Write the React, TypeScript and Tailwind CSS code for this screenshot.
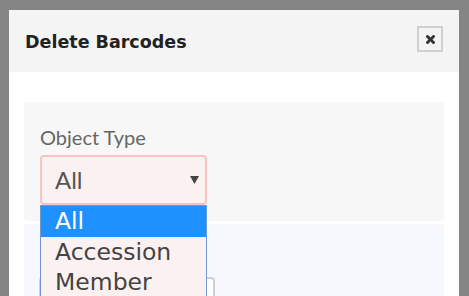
import { useState } from 'react';

const OPTIONS = ['All', 'Accession', 'Member'];

export default function App() {
  const [selected, setSelected] = useState('All');

  return (
    <div className="min-h-[296px] h-[296px] overflow-hidden bg-[#858585] pl-[9px] pt-[10px]">
      <div className="w-[450px] h-[300px] bg-white">
        <div className="h-[62px] bg-[#f4f4f4] flex items-center justify-between pl-[16px] pr-[16px]">
          <h2 className="text-[17.5px] font-bold text-[#222] font-['DejaVu_Sans',sans-serif] pt-[2px]">Delete Barcodes</h2>
          <button
            type="button"
            className="w-[26px] h-[26px] border-2 border-[#d0d0d0] flex items-center justify-center mb-[4px]"
          >
            <svg width="9" height="9" viewBox="0 0 9 9">
              <path d="M1.5 1.5 L7.5 7.5 M7.5 1.5 L1.5 7.5" stroke="#333" strokeWidth="2.8" strokeLinecap="square" />
            </svg>
          </button>
        </div>
        <div className="pt-[30px] px-[15px] flex flex-col gap-[3px]">
          <div className="h-[119px] rounded-[4px] bg-[#f7f7f7] px-[16px] pt-[22px]">
            <label className="block text-[20px] leading-[26px] text-[#666] font-['Lato',sans-serif]">Object Type</label>
            <div className="relative mt-[5px] w-[167px]">
              <div className="h-[50px] rounded-[4px] border-2 border-[#f7c3c3] bg-[#fcf1f1] flex items-center justify-between pl-[13px] pr-[6px]">
                <span className="text-[24px] text-[#555] font-['Lato',sans-serif]">{selected}</span>
                <svg width="9" height="8" viewBox="0 0 9 8">
                  <path d="M0 0 H9 L4.5 8 Z" fill="#444" />
                </svg>
              </div>
              <ul className="absolute left-0 top-[50px] w-[167px] z-10 border border-[#7097d6] bg-[#fcf1f1] font-['DejaVu_Sans',sans-serif] text-[23.5px] leading-[31px]">
                {OPTIONS.map((opt) => (
                  <li
                    key={opt}
                    onClick={() => setSelected(opt)}
                    className={`pl-[14px] h-[30px] ${opt === selected ? 'bg-[#1e90ff] text-white h-[31px]' : 'text-[#444]'}`}
                  >
                    {opt}
                  </li>
                ))}
              </ul>
            </div>
          </div>
          <div className="h-[120px] rounded-[4px] bg-[#f7f8fd] px-[15px] pt-[53px]">
            <div className="w-[176px] h-[36px] rounded-[4px] border-2 border-[#d0d0d0] bg-white" />
          </div>
        </div>
      </div>
    </div>
  );
}
